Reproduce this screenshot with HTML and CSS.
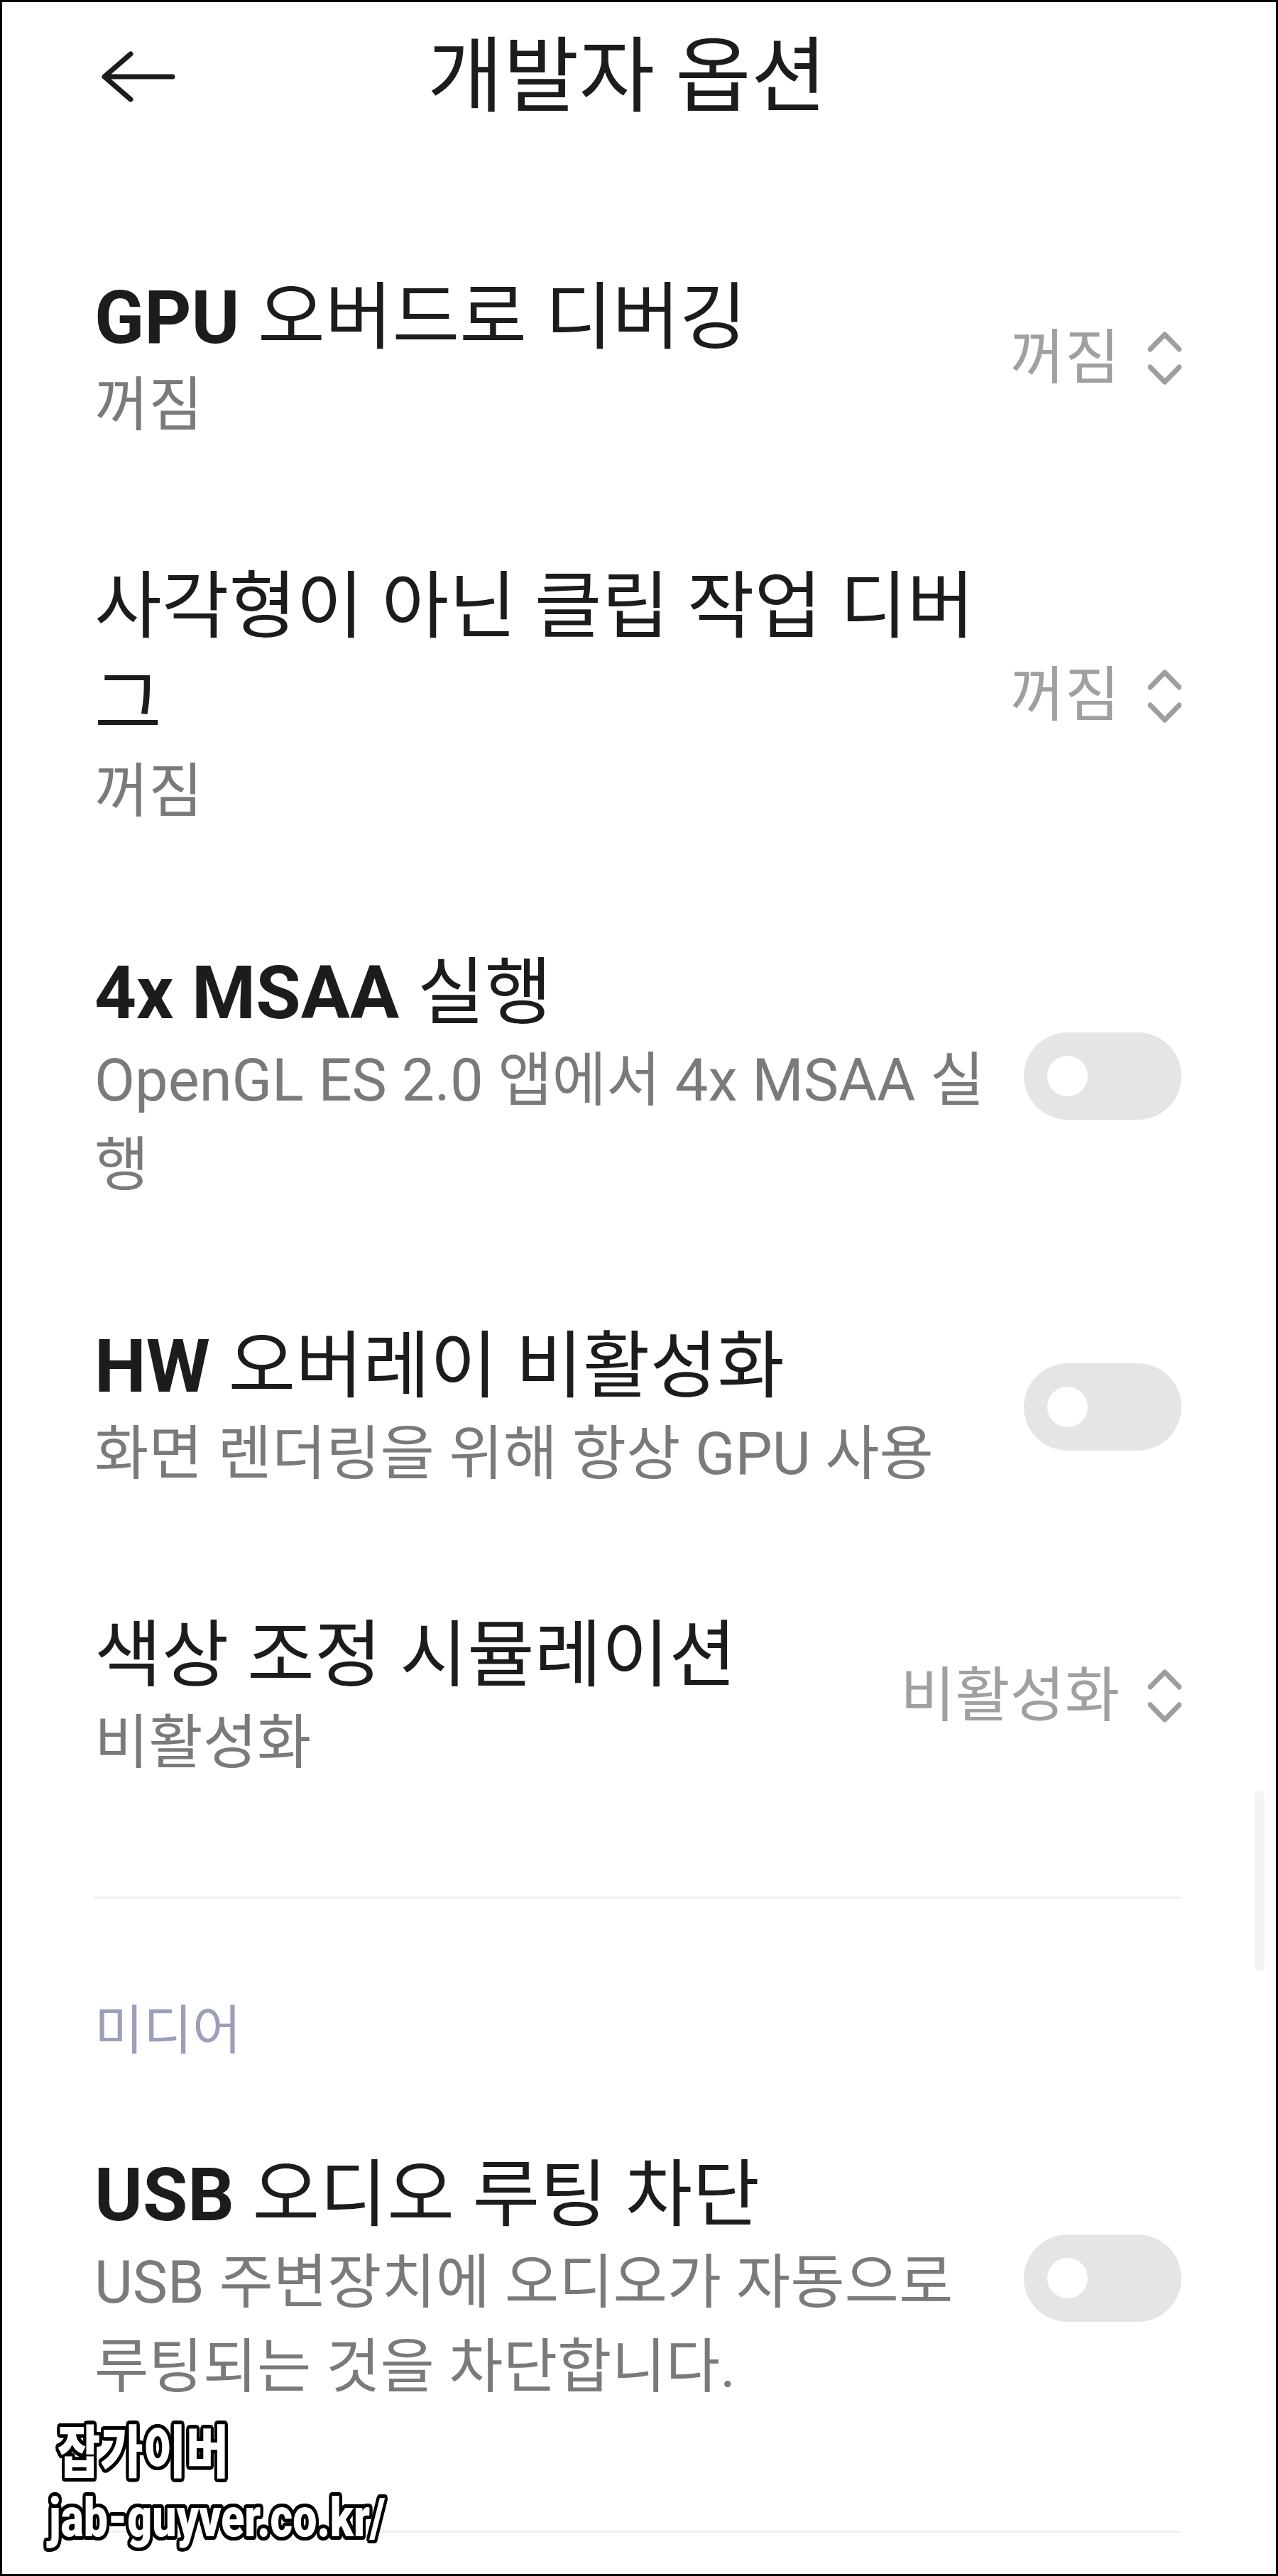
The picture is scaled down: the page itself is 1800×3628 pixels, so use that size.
FILE: index.html
```html
<!DOCTYPE html>
<html>
    <head>
        <meta charset="utf-8">
        <title>개발자 옵션</title>
        <link rel="stylesheet" href="styles.css">
    </head>
    <body>
        <div class="screen">
            <header class="topbar">
                <svg class="back" width="104" height="72" viewBox="0 0 104 72">
                    <path d="M41 4 L4 36 L41 68 M4 36 L100 36" fill="none" stroke="#1c1c1c" stroke-width="7" stroke-linecap="round" stroke-linejoin="round"/>
                </svg>
                <h1 class="page_title">개발자 옵션</h1>
            </header>

            <div class="list">
                <div class="item">
                    <div class="item_text">
                        <div class="item_title"><b>GPU</b> 오버드로 디버깅</div>
                        <div class="item_sub">꺼짐</div>
                    </div>
                    <div class="item_value">꺼짐
                        <svg class="updown" width="47" height="75" viewBox="0 0 47 75">
                            <path d="M3 25 L23.5 4 L44 25 M3 50 L23.5 71 L44 50" fill="none" stroke="#9e9e9e" stroke-width="7" stroke-linecap="round" stroke-linejoin="round"/>
                        </svg>
                    </div>
                </div>

                <div class="item">
                    <div class="item_text">
                        <div class="item_title">사각형이 아닌 클립 작업 디버그</div>
                        <div class="item_sub">꺼짐</div>
                    </div>
                    <div class="item_value">꺼짐
                        <svg class="updown" width="47" height="75" viewBox="0 0 47 75">
                            <path d="M3 25 L23.5 4 L44 25 M3 50 L23.5 71 L44 50" fill="none" stroke="#9e9e9e" stroke-width="7" stroke-linecap="round" stroke-linejoin="round"/>
                        </svg>
                    </div>
                </div>

                <div class="item">
                    <div class="item_text">
                        <div class="item_title"><b>4x MSAA</b> 실행</div>
                        <div class="item_sub">OpenGL ES 2.0 앱에서 4x MSAA 실행</div>
                    </div>
                    <div class="toggle"><span class="knob"></span></div>
                </div>

                <div class="item">
                    <div class="item_text">
                        <div class="item_title"><b>HW</b> 오버레이 비활성화</div>
                        <div class="item_sub">화면 렌더링을 위해 항상 GPU 사용</div>
                    </div>
                    <div class="toggle"><span class="knob"></span></div>
                </div>

                <div class="item">
                    <div class="item_text">
                        <div class="item_title">색상 조정 시뮬레이션</div>
                        <div class="item_sub">비활성화</div>
                    </div>
                    <div class="item_value">비활성화
                        <svg class="updown" width="47" height="75" viewBox="0 0 47 75">
                            <path d="M3 25 L23.5 4 L44 25 M3 50 L23.5 71 L44 50" fill="none" stroke="#9e9e9e" stroke-width="7" stroke-linecap="round" stroke-linejoin="round"/>
                        </svg>
                    </div>
                </div>

                <hr class="divider divider_top">

                <div class="section">미디어</div>

                <div class="item">
                    <div class="item_text">
                        <div class="item_title"><b>USB</b> 오디오 루팅 차단</div>
                        <div class="item_sub">USB 주변장치에 오디오가 자동으로<br>루팅되는 것을 차단합니다.</div>
                    </div>
                    <div class="toggle"><span class="knob"></span></div>
                </div>

                <hr class="divider divider_bottom">
            </div>

            <div class="scrollbar"></div>

            <div class="watermark">
                <div class="wm_name">잡가이버</div>
                <div class="wm_url">jab-guyver.co.kr/</div>
            </div>
        </div>
    </body>
</html>
```

FILE: styles.css
```css
* {
    box-sizing: border-box;
}

body {
    margin: 0;
    font-family: "Roboto", "Noto Sans CJK KR", sans-serif;
    background: #fff;
}

.screen {
    position: relative;
    width: 1800px;
    height: 3628px;
    border: 3px solid #000;
    background: #fff;
    overflow: hidden;
}

/* 상단 바 */
.topbar {
    display: flex;
    align-items: center;
    height: 210px;
    padding-left: 140px;
}

.page_title {
    margin: 0 0 0 355px;
    font-size: 116px;
    font-weight: 400;
    line-height: 208px;
    color: #1c1c1c;
}

/* 설정 목록 */
.list {
    padding: 88px 133px 0 130px;
}

.item {
    display: flex;
    align-items: center;
    padding: 78px 0;
}

.item_text {
    flex: 1;
    min-width: 0;
}

.item_title {
    font-size: 103px;
    font-weight: 400;
    line-height: 137px;
    color: #1c1c1c;
}

.item_title b {
    font-weight: 700;
}

.item_sub {
    margin-top: -5px;
    font-size: 83px;
    line-height: 119px;
    color: #7a7a7a;
}

.item_value {
    display: flex;
    align-items: center;
    margin-left: 24px;
    font-size: 84px;
    line-height: 1;
    color: #a0a0a0;
    white-space: nowrap;
}

.item_value .updown {
    margin-left: 40px;
}

.toggle {
    display: flex;
    align-items: center;
    flex-shrink: 0;
    width: 222px;
    height: 123px;
    margin-left: 40px;
    padding-left: 33px;
    border-radius: 62px;
    background: #e5e5e5;
}

.toggle .knob {
    width: 57px;
    height: 57px;
    border-radius: 50%;
    background: #fff;
}

.divider {
    height: 3px;
    margin: 0;
    border: none;
    background: #f0f0f0;
}

.divider_top {
    margin-top: 79px;
}

.divider_bottom {
    margin-top: 93px;
}

.section {
    margin: 136px 0 35px;
    font-size: 75px;
    line-height: 100px;
    color: #9c9fba;
}

.scrollbar {
    position: absolute;
    left: 1764px;
    top: 2519px;
    width: 14px;
    height: 254px;
    border-radius: 7px;
    background: #f3f3f3;
}

/* 워터마크 */
.watermark {
    position: absolute;
    left: 66px;
    top: 3398px;
    color: #fff;
    font-weight: 900;
    text-shadow:
        5px 0 0 #000, -5px 0 0 #000, 0 5px 0 #000, 0 -5px 0 #000,
        4px 4px 0 #000, -4px 4px 0 #000, 4px -4px 0 #000, -4px -4px 0 #000,
        5px 2px 0 #000, -5px 2px 0 #000, 5px -2px 0 #000, -5px -2px 0 #000,
        2px 5px 0 #000, -2px 5px 0 #000, 2px -5px 0 #000, -2px -5px 0 #000;
}

.wm_name {
    margin-left: 12px;
    font-family: "Noto Sans CJK KR", sans-serif;
    font-size: 80px;
    line-height: 92px;
    transform: scaleX(0.82);
    transform-origin: left;
}

.wm_url {
    margin-top: 10px;
    font-family: "Roboto", sans-serif;
    font-size: 76px;
    line-height: 86px;
    transform: scaleX(0.8);
    transform-origin: left;
}
```
